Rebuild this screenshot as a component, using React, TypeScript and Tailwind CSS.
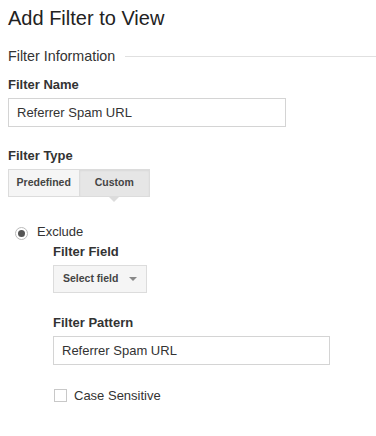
import React from "react";

function FieldLabel({ children, className = "" }: { children: React.ReactNode; className?: string }) {
  return <div className={`text-[13px] font-bold leading-4 text-[#333] ${className}`}>{children}</div>;
}

function TextBox({ value, className = "" }: { value: string; className?: string }) {
  return (
    <div
      className={`flex h-[29px] items-center border border-[#d4d4d4] bg-white px-[8px] text-[13px] text-[#333] ${className}`}
    >
      {value}
    </div>
  );
}

export default function App() {
  return (
    <div className="h-[436px] w-[376px] bg-white pl-2 pt-[6px] font-['Liberation_Sans',Arial,sans-serif] text-[#333]">
      <h1 className="text-[20px] leading-6 text-[#222]">Add Filter to View</h1>

      <div className="mt-4 flex h-5 items-center gap-[10px]">
        <span className="text-[14.3px] leading-5 text-[#333]">Filter Information</span>
        <div className="h-px flex-1 bg-[#e0e0e0]" />
      </div>

      <FieldLabel className="mt-[11px]">Filter Name</FieldLabel>
      <TextBox value="Referrer Spam URL" className="mt-[5px] w-[278px]" />

      <FieldLabel className="mt-[21px]">Filter Type</FieldLabel>
      <div className="mt-[5px] flex h-[28px] w-[142px] border border-[#dcdcdc] text-[10.5px] font-bold text-[#444]">
        <div className="flex flex-1 items-center justify-center bg-[#f5f5f5]">Predefined</div>
        <div className="relative flex flex-1 items-center justify-center border-l border-[#dcdcdc] bg-[#e6e6e6] shadow-[inset_0_1px_2px_rgba(0,0,0,0.06)]">
          Custom
          <div className="absolute left-1/2 top-full h-0 w-0 -translate-x-1/2 border-x-[6px] border-t-[6px] border-x-transparent border-t-[#dcdcdc]" />
        </div>
      </div>

      <div className="mt-[27px] flex items-start">
        <div className="ml-[7px] mt-[3px] flex h-[13px] w-[13px] items-center justify-center rounded-full border border-[#bbb] bg-white">
          <div className="h-[7px] w-[7px] rounded-full bg-[#555]" />
        </div>
        <span className="ml-[9px] text-[13px] leading-4 text-[#333]">Exclude</span>
      </div>

      <div className="pl-[45px]">
        <FieldLabel className="mt-[4px]">Filter Field</FieldLabel>
        <div className="mt-[5px] flex h-[28px] w-[94px] items-center border border-[#dcdcdc] bg-[#f5f5f5] pl-[9px] text-[10.5px] font-bold text-[#444]">
          Select field
          <div className="ml-auto mr-[9px] h-0 w-0 border-x-[4px] border-t-[4px] border-x-transparent border-t-[#888]" />
        </div>

        <FieldLabel className="mt-[22px]">Filter Pattern</FieldLabel>
        <TextBox value="Referrer Spam URL" className="mt-[5px] h-[28px] w-[277px]" />

        <label className="mt-[23px] flex items-start">
          <div className="ml-px mt-[1px] h-[13px] w-[13px] border border-[#c8c8c8] bg-white" />
          <span className="ml-[7px] text-[13px] leading-4 text-[#333]">Case Sensitive</span>
        </label>
      </div>
    </div>
  );
}
